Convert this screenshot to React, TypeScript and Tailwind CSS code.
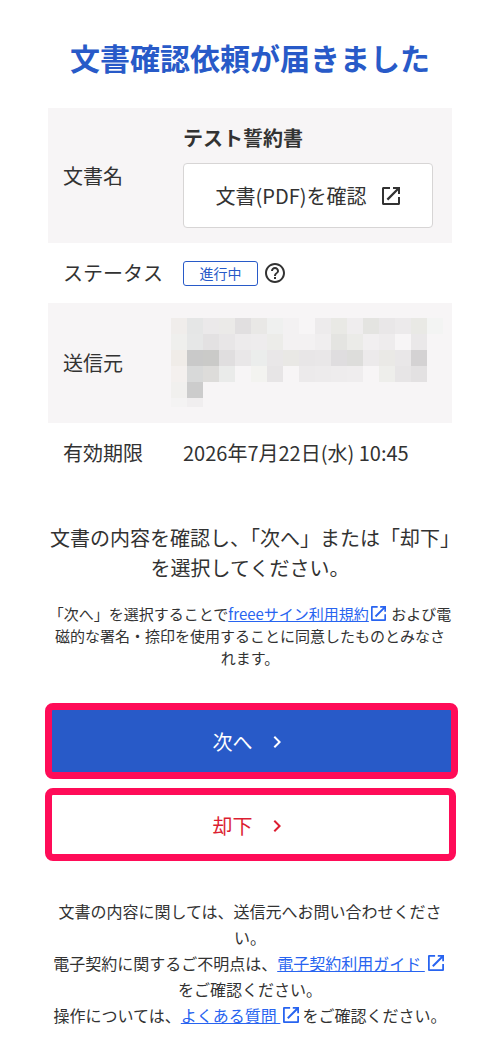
import React from "react";
import { MdChevronRight, MdHelpOutline } from "react-icons/md";
import { clsx } from "clsx";

// Sender name is redacted: 16px blocks, "-" leaves the row colour
const MOSAIC = [
    "f0edeb e5e6e6 ebe9ea ebeae8 e1dfe0 e9e8e6 eff0ef f3f1f2 - edebec e9e9e5 efedee e4e4e1 e9e7e8 eceaeb e9e9e5 f3f4f3",
    "efefed e6e7e7 e3e1e2 e8e6e7 edebec eeeced ecece9 f3f1f2 f3f1f2 f0eeef e4e4e1 ebebe8 f1eff0 eeeced - eae8e9",
    "f0ece8 c9c9c9 cacac8 e0dedf e9e7e8 ebedec e9e7e8 e9e8e5 e8e6e7 e9e7e8 dfdddf dddddb eceaeb eae9e6 e9e7e8 d4d2d3",
    "f4f0ee d8d9d9 dddcda eaebea - f3f3f0 e7e5e6 - eceaeb edebec eeeced efedee - eeeeeb e7e5e6 e3e1e2",
    "f1f0ee cccccc",
    "f4f3f3 f0eeef",
].map((row) => row.split(" "));

const RedactedSender: React.FC = () => (
    <svg width="272" height="89" viewBox="0 0 272 89" shapeRendering="crispEdges" role="img" aria-label="送信元" className="block">
        {MOSAIC.map((row, y) =>
            row.map((color, x) =>
                color === "-" ? null : (
                    <rect key={`${x}-${y}`} x={x * 16} y={y * 16} width="16" height="16" fill={`#${color}`} />
                )
            )
        )}
    </svg>
);

const OpenInNewIcon: React.FC<{ className?: string }> = ({ className }) => (
    <svg viewBox="0 0 18 18" fill="currentColor" aria-hidden="true" className={className}>
        <path d="M16 16H2V2h6V0H1.5C.6 0 0 .6 0 1.5v15c0 .9.6 1.5 1.5 1.5h15c.9 0 1.5-.6 1.5-1.5V10h-2v6zM11 0v2h3.4L4.6 11.8l1.6 1.6L16 3.6V7h2V0h-7z" />
    </svg>
);

interface RowProps {
    label: string;
    shaded?: boolean;
    valueClass?: string;
    children: React.ReactNode;
}

const Row: React.FC<RowProps> = ({ label, shaded, valueClass = "px-[15px] py-[15px]", children }) => (
    <tr className={clsx(shaded && "bg-[#f7f5f6]")}>
        <th scope="row" className="w-[120px] py-[15px] pl-[15px] text-left font-normal whitespace-nowrap">
            {label}
        </th>
        <td className={valueClass}>{children}</td>
    </tr>
);

const ExternalLink: React.FC<{ children: React.ReactNode; iconClass: string }> = ({ children, iconClass }) => (
    <a href="#" className="text-[#2864f0]">
        <span className="underline">{children}</span>
        <OpenInNewIcon className={clsx("inline-block align-[-1px]", iconClass)} />
    </a>
);

export default function App() {
    return (
        <main
            lang="ja"
            className="bg-white pt-[35px] pb-[22px] font-['Noto_Sans_CJK_JP',sans-serif] text-[20px] leading-[30px] text-[#323232]"
        >
            <h1 className="text-center text-[30px] leading-[45px] font-bold text-[#285ac8]">文書確認依頼が届きました</h1>

            <div className="mt-[28px] px-[48px]">
                <table className="w-full border-collapse">
                    <tbody>
                        <Row label="文書名" shaded>
                            <p className="font-bold">テスト誓約書</p>
                            <button
                                type="button"
                                className="mt-[10px] flex h-[65px] w-[250px] items-center justify-center gap-[16px] rounded-[4px] border border-[#d7d5d5] bg-white"
                            >
                                文書(PDF)を確認
                                <OpenInNewIcon className="size-[18px]" />
                            </button>
                        </Row>
                        <Row label="ステータス">
                            <div className="flex h-[30px] items-center gap-[5px]">
                                <span className="flex h-[25px] w-[75px] items-center justify-center rounded-[3px] border border-[#285ac8] text-[14px] leading-[22px] text-[#285ac8]">
                                    進行中
                                </span>
                                <button type="button" aria-label="ステータスについて">
                                    <MdHelpOutline size={24} />
                                </button>
                            </div>
                        </Row>
                        <Row label="送信元" shaded valueClass="h-[120px] pb-[1px] pl-[3px]">
                            <RedactedSender />
                        </Row>
                        <Row label="有効期限">2026年7月22日(水) 10:45</Row>
                    </tbody>
                </table>
            </div>

            <div className="mt-[40px] px-[48px] text-center">
                <p>文書の内容を確認し、「次へ」または「却下」を選択してください。</p>
                <p className="mt-[20px] text-[15px] leading-[22px]">
                    「次へ」を選択することで
                    <ExternalLink iconClass="mx-[2px] size-[15px]">freeeサイン利用規約</ExternalLink>
                    {" および電磁的な署名・捺印を使用することに同意したものとみなされます。"}
                </p>
            </div>

            <div className="mt-[34px] flex flex-col gap-[9px] pr-[42px] pl-[45px]">
                <button
                    type="button"
                    className="flex h-[76px] items-center justify-center gap-[12px] rounded-[8px] border-[7px] border-[#ff0c58] bg-[#285ac8] pt-[2px] pr-[2px] text-white"
                >
                    次へ
                    <MdChevronRight size={24} />
                </button>
                <button
                    type="button"
                    className="mr-[2px] flex h-[73px] items-center justify-center gap-[12px] rounded-[8px] border-[7px] border-[#ff0c58] bg-white pt-[2px] text-[#dc1e32]"
                >
                    却下
                    <MdChevronRight size={24} />
                </button>
            </div>

            <div className="mt-[37px] px-[51px] text-center text-[16px] leading-[26px]">
                <p>文書の内容に関しては、送信元へお問い合わせください。</p>
                <p>
                    電子契約に関するご不明点は、
                    <ExternalLink iconClass="mx-[3px] size-[16px]">電子契約利用ガイド </ExternalLink>
                    をご確認ください。
                </p>
                <p>
                    操作については、
                    <ExternalLink iconClass="mx-[3px] size-[16px]">よくある質問 </ExternalLink>
                    をご確認ください。
                </p>
            </div>
        </main>
    );
}
